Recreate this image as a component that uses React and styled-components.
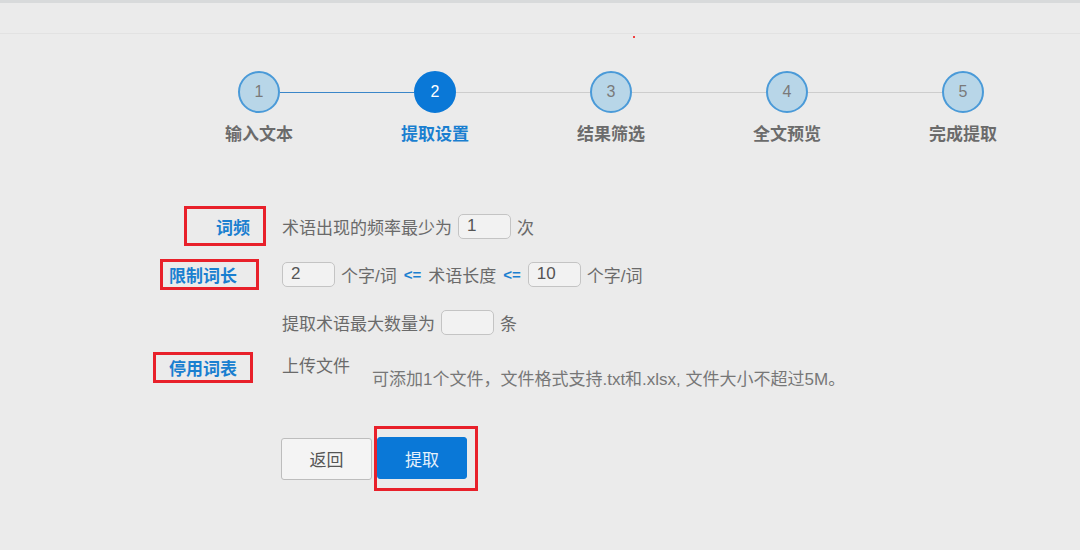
import React from "react";
import styled, { createGlobalStyle } from "styled-components";

const GlobalStyle = createGlobalStyle`
  html, body {
    margin: 0;
    padding: 0;
    background: #ebebeb;
  }
  body {
    font-family: "Liberation Sans", "Noto Sans CJK SC", sans-serif;
    color: #666;
  }
`;

const Page = styled.div`
  width: 1080px;
  height: 550px;
  overflow: hidden;
  background: #ebebeb;
`;

const TopStrip = styled.div`
  height: 3px;
  background: #d8dadb;
`;

const Header = styled.div`
  height: 30px;
  border-bottom: 1px solid #e2e2e2;
`;

const DotRow = styled.div`
  display: flex;
  height: 4px;
  margin-top: 2px;
  padding-left: 633px;
`;

const Dot = styled.span`
  width: 2px;
  height: 2px;
  background: #f04040;
`;

const CircleRow = styled.div`
  display: flex;
  align-items: center;
  margin-top: 31px;
  padding-left: 238px;
`;

const Circle = styled.div`
  width: 42px;
  height: 42px;
  box-sizing: border-box;
  border-radius: 50%;
  flex-shrink: 0;
  display: flex;
  align-items: center;
  justify-content: center;
  font-size: 16px;
  border: 2px solid ${(p) => (p.$active ? "#0a78d7" : "#4a9ad8")};
  background: ${(p) => (p.$active ? "#0a78d7" : "#b8d6e8")};
  color: ${(p) => (p.$active ? "#ffffff" : "#7a7a7a")};
`;

const Connector = styled.div`
  width: 134px;
  height: 1px;
  flex-shrink: 0;
  background: ${(p) => (p.$done ? "#3a86c8" : "#cdcdcd")};
`;

const LabelRow = styled.div`
  display: flex;
  margin-top: 11px;
  padding-left: 171px;
`;

const StepLabel = styled.div`
  width: 176px;
  text-align: center;
  font-size: 17px;
  line-height: 22px;
  font-weight: bold;
  color: ${(p) => (p.$active ? "#1a7fd0" : "#6b6b6b")};
`;

const Form = styled.div`
  margin-top: 56px;
  display: flex;
  flex-direction: column;
`;

const Row = styled.div`
  display: flex;
  align-items: ${(p) => (p.$top ? "flex-start" : "center")};
  height: ${(p) => p.$height || 48}px;
`;

const LabelCell = styled.div`
  width: 282px;
  flex-shrink: 0;
  display: flex;
`;

const LabelBox = styled.div`
  box-sizing: border-box;
  margin-left: ${(p) => p.$left}px;
  margin-top: ${(p) => p.$top || 0}px;
  width: ${(p) => p.$width}px;
  height: ${(p) => p.$height}px;
  border: 3px solid #e8202a;
  display: flex;
  align-items: center;
  justify-content: ${(p) => (p.$right ? "flex-end" : "flex-start")};
  padding: 0 ${(p) => p.$padRight || 0}px 0 ${(p) => p.$padLeft || 0}px;
  font-size: 17px;
  font-weight: bold;
  color: #1a7fd0;
  white-space: nowrap;
`;

const Content = styled.div`
  display: flex;
  align-items: center;
  gap: 6px;
  font-size: 17px;
  color: #6a6a6a;
  white-space: nowrap;
`;

const Op = styled.span`
  color: #1a7fd0;
  font-weight: bold;
  font-size: 15px;
  margin: 0 1px;
`;

const NumInput = styled.div`
  box-sizing: border-box;
  width: 53px;
  height: 25px;
  border: 1px solid #c4c4c4;
  border-radius: 5px;
  background: #f2f2f2;
  padding-left: 8px;
  display: flex;
  align-items: center;
  font-size: 17px;
  color: #555;
`;

const UploadLabel = styled.div`
  margin-top: 10px;
  font-size: 17px;
  line-height: 22px;
  color: #6a6a6a;
`;

const Hint = styled.div`
  margin-top: 23px;
  margin-left: 22px;
  font-size: 17px;
  line-height: 22px;
  color: #777;
  white-space: nowrap;
`;

const ButtonRow = styled.div`
  display: flex;
  align-items: center;
  gap: 2px;
  margin-top: 20px;
  padding-left: 281px;
`;

const Button = styled.button`
  box-sizing: border-box;
  width: ${(p) => (p.$primary ? 90 : 91)}px;
  height: 42px;
  border-radius: 3px;
  font-family: inherit;
  font-size: 17px;
  cursor: pointer;
  border: 1px solid ${(p) => (p.$primary ? "#0a78d7" : "#bdbdbd")};
  background: ${(p) => (p.$primary ? "#0a78d7" : "#f4f4f4")};
  color: ${(p) => (p.$primary ? "#e6f1fb" : "#555")};
`;

const Highlight = styled.div`
  border: 3px solid #e8202a;
  padding: 8px 8px 9px 0;
  display: flex;
`;

const steps = ["输入文本", "提取设置", "结果筛选", "全文预览", "完成提取"];
const current = 1;

export default function App() {
  return (
    <Page>
      <GlobalStyle />
      <TopStrip />
      <Header />
      <DotRow>
        <Dot />
      </DotRow>

      <CircleRow>
        {steps.map((s, i) => (
          <React.Fragment key={s}>
            <Circle $active={i === current}>{i + 1}</Circle>
            {i < steps.length - 1 && <Connector $done={i < current} />}
          </React.Fragment>
        ))}
      </CircleRow>
      <LabelRow>
        {steps.map((s, i) => (
          <StepLabel key={s} $active={i === current}>
            {s}
          </StepLabel>
        ))}
      </LabelRow>

      <Form>
        <Row>
          <LabelCell>
            <LabelBox $left={184} $width={82} $height={40} $right $padRight={13}>
              词频
            </LabelBox>
          </LabelCell>
          <Content>
            <span>术语出现的频率最少为</span>
            <NumInput>1</NumInput>
            <span>次</span>
          </Content>
        </Row>

        <Row>
          <LabelCell>
            <LabelBox $left={160} $width={99} $height={31} $padLeft={6}>
              限制词长
            </LabelBox>
          </LabelCell>
          <Content>
            <NumInput>2</NumInput>
            <span>个字/词</span>
            <Op>&lt;=</Op>
            <span>术语长度</span>
            <Op>&lt;=</Op>
            <NumInput>10</NumInput>
            <span>个字/词</span>
          </Content>
        </Row>

        <Row>
          <LabelCell />
          <Content>
            <span>提取术语最大数量为</span>
            <NumInput />
            <span>条</span>
          </Content>
        </Row>

        <Row $top $height={60}>
          <LabelCell>
            <LabelBox $left={153} $top={6} $width={100} $height={31} $padLeft={13}>
              停用词表
            </LabelBox>
          </LabelCell>
          <UploadLabel>上传文件</UploadLabel>
          <Hint>可添加1个文件，文件格式支持.txt和.xlsx, 文件大小不超过5M。</Hint>
        </Row>
      </Form>

      <ButtonRow>
        <Button>返回</Button>
        <Highlight>
          <Button $primary>提取</Button>
        </Highlight>
      </ButtonRow>
    </Page>
  );
}
